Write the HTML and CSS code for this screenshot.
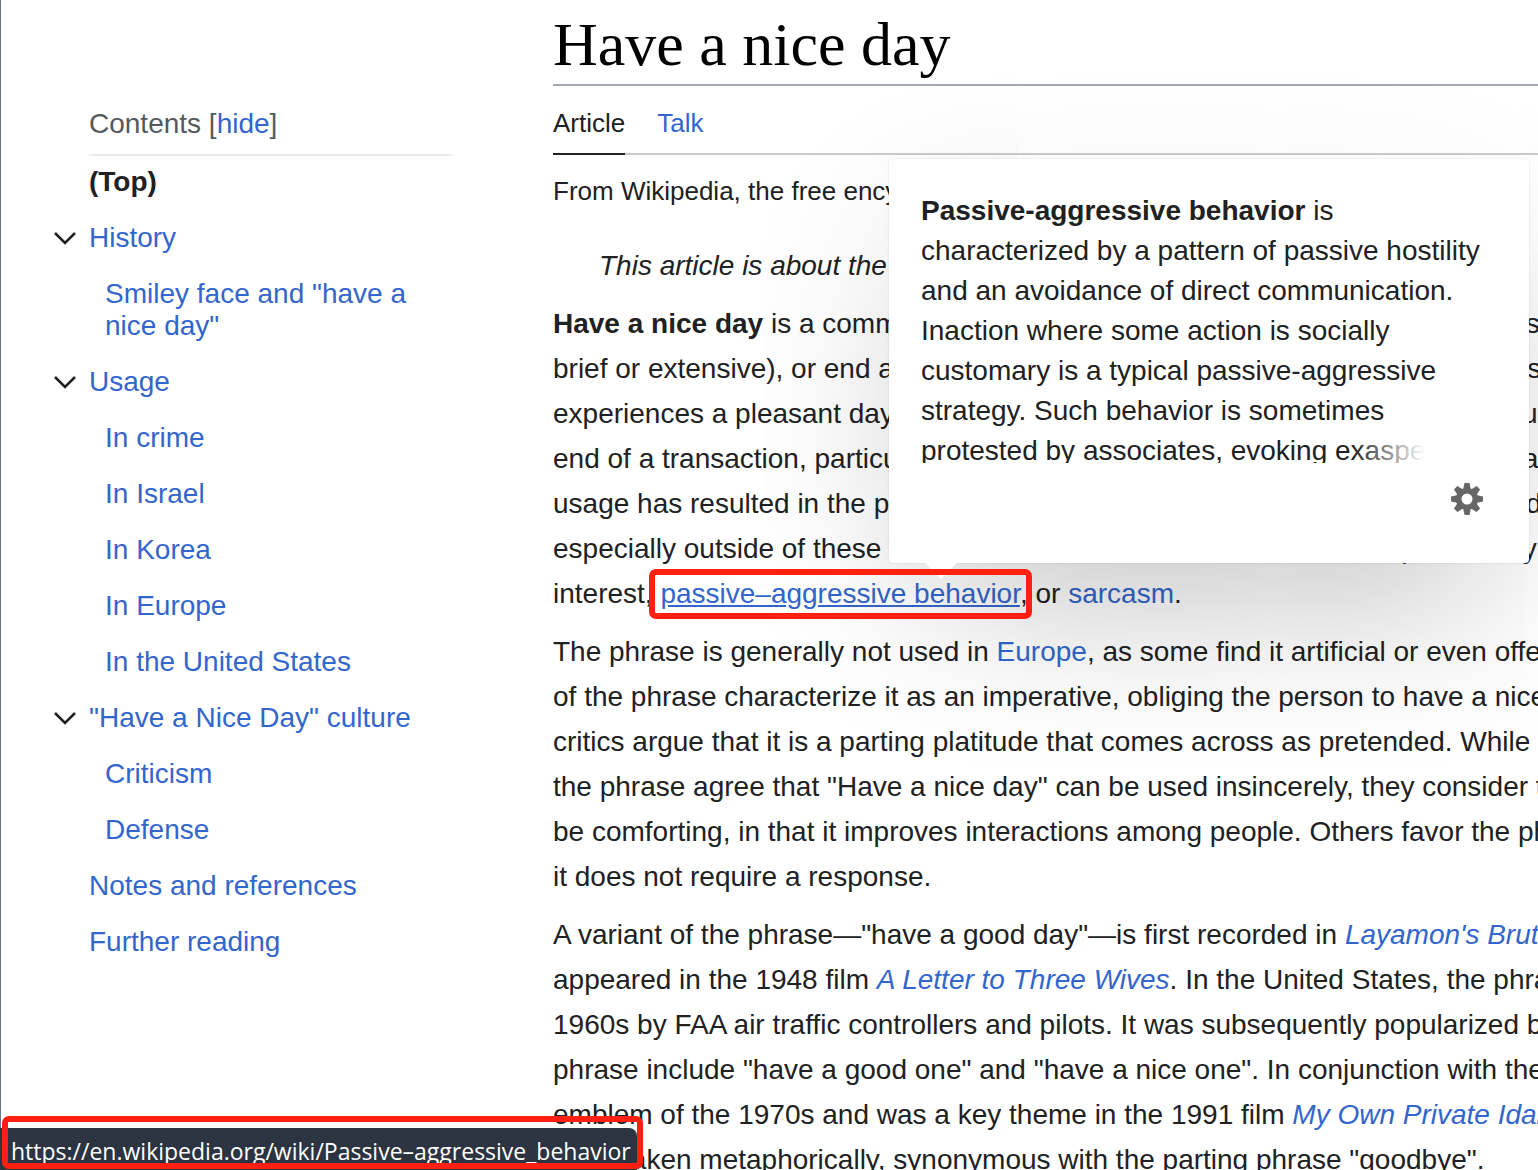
FILE: index.html
```
<!DOCTYPE html>
<html lang="en">
<head>
<meta charset="utf-8">
<title>Have a nice day - Wikipedia</title>
<link rel="stylesheet" href="styles.css">
</head>
<body>
<div class="page">
  <nav class="toc" aria-label="Contents">
    <div class="toc-header">Contents [<button type="button" class="toc-hide">hide</button>]</div>
    <ul class="toc-list">
      <li class="toc-item"><a class="toc-top" href="#top">(Top)</a></li>
      <li class="toc-item">
        <button type="button" class="toc-toggle" aria-label="Toggle History subsection"><svg viewBox="0 0 24 16" width="24" height="16"><path d="M2 3l10 10L22 3"/></svg></button>
        <a href="#History">History</a>
      </li>
      <li class="toc-item toc-sub"><a href="#Smiley">Smiley face and "have a nice day"</a></li>
      <li class="toc-item">
        <button type="button" class="toc-toggle" aria-label="Toggle Usage subsection"><svg viewBox="0 0 24 16" width="24" height="16"><path d="M2 3l10 10L22 3"/></svg></button>
        <a href="#Usage">Usage</a>
      </li>
      <li class="toc-item toc-sub"><a href="#Crime">In crime</a></li>
      <li class="toc-item toc-sub"><a href="#Israel">In Israel</a></li>
      <li class="toc-item toc-sub"><a href="#Korea">In Korea</a></li>
      <li class="toc-item toc-sub"><a href="#Europe">In Europe</a></li>
      <li class="toc-item toc-sub"><a href="#US">In the United States</a></li>
      <li class="toc-item">
        <button type="button" class="toc-toggle" aria-label="Toggle culture subsection"><svg viewBox="0 0 24 16" width="24" height="16"><path d="M2 3l10 10L22 3"/></svg></button>
        <a href="#Culture">"Have a Nice Day" culture</a>
      </li>
      <li class="toc-item toc-sub"><a href="#Criticism">Criticism</a></li>
      <li class="toc-item toc-sub"><a href="#Defense">Defense</a></li>
      <li class="toc-item"><a href="#Notes">Notes and references</a></li>
      <li class="toc-item"><a href="#Further">Further reading</a></li>
    </ul>
  </nav>

  <main class="article" id="top">
    <h1 class="title">Have a nice day</h1>
    <ul class="tabs">
      <li><a class="tab tab-selected" href="#article">Article</a></li>
      <li><a class="tab" href="#talk">Talk</a></li>
    </ul>
    <div class="tagline">From Wikipedia, the free encyclopedia</div>
    <div class="hatnote">This article is about the phrase.</div>
    <p><b>Have a nice day</b> is a commonly spoken expression used to conclude a conversation (whether<br>
    brief or extensive), or end a message by hoping the person to whom it is addressed<br>
    experiences a pleasant day. It is often uttered by some service employees to customers at the<br>
    end of a transaction, particularly in Israel and the United States. Its repetitious and dutiful<br>
    usage has resulted in the phrase developing the cultural connotation of hollow duty<br>
    especially outside of these countries, where it can mean a tone of impersonality<br>
    interest, <span class="marked"><a class="hovered" href="#behavior">passive–aggressive behavior</a>,</span> or <a href="#sarcasm">sarcasm</a>.</p>
    <p>The phrase is generally not used in <a href="#eu">Europe</a>, as some find it artificial or even offensive. Critics<br>
    of the phrase characterize it as an imperative, obliging the person to have a nice day. Other<br>
    critics argue that it is a parting platitude that comes across as pretended. While defenders of<br>
    the phrase agree that "Have a nice day" can be used insincerely, they consider the phrase to<br>
    be comforting, in that it improves interactions among people. Others favor the phrase because<br>
    it does not require a response.</p>
    <p>A variant of the phrase—"have a good day"—is first recorded in <a href="#brut"><i>Layamon's Brut</i></a> and<br>
    appeared in the 1948 film <a href="#wives"><i>A Letter to Three Wives</i></a>. In the United States, the phrase was<br>
    1960s by FAA air traffic controllers and pilots. It was subsequently popularized by truckers<br>
    phrase include "have a good one" and "have a nice one". In conjunction with the smiley<br>
    emblem of the 1970s and was a key theme in the 1991 film <a href="#idaho"><i>My Own Private Idaho</i></a>.<br>
    often taken metaphorically, synonymous with the parting phrase "goodbye".</p>

    <aside class="popup">
      <div class="popup-text"><b>Passive-aggressive behavior</b> is characterized by a pattern of passive hostility and an avoidance of direct communication. Inaction where some action is socially customary is a typical passive-aggressive strategy. Such behavior is sometimes <span class="popup-last">protested by associates, evoking exasperation</span></div>
      <div class="popup-footer">
        <button type="button" class="popup-settings" aria-label="Preview settings">
          <svg viewBox="-16 -16 32 32" width="32" height="32">
            <defs><path id="tooth" d="M-2.5-16h5l1.2 6h-7.4z"/></defs>
            <circle r="8.3" fill="none" stroke="#666" stroke-width="5.6"/>
            <g fill="#666">
              <use href="#tooth"/><use href="#tooth" transform="rotate(45)"/><use href="#tooth" transform="rotate(90)"/><use href="#tooth" transform="rotate(135)"/>
              <use href="#tooth" transform="rotate(180)"/><use href="#tooth" transform="rotate(225)"/><use href="#tooth" transform="rotate(270)"/><use href="#tooth" transform="rotate(315)"/>
            </g>
          </svg>
        </button>
      </div>
    </aside>
  </main>
</div>
<div class="status">https://en.wikipedia.org/wiki/Passive–aggressive_behavior</div>
</body>
</html>
```
FILE: styles.css
```
* {
  box-sizing: border-box;
}

body {
  margin: 0;
  height: 100vh;
  overflow: hidden;
  background: #fff;
  color: #202122;
  font: 28px/32px "Liberation Sans", Arial, sans-serif;
}

a {
  color: #36c;
  text-decoration: none;
}

button {
  padding: 0;
  border: 0;
  background: none;
  color: inherit;
  font: inherit;
  cursor: pointer;
}

ul {
  margin: 0;
  padding: 0;
  list-style: none;
}

.page {
  display: grid;
  grid-template-columns: 452px minmax(0, 1fr);
  column-gap: 100px;
  min-height: 100vh;
  border-left: 1px solid #6b768a;
}

/* Table of contents */
.toc {
  padding: 108px 0 0 52px;
}

.toc-header {
  margin-left: 36px;
  padding-bottom: 14px;
  border-bottom: 2px solid #eaecf0;
  color: #54595d;
}

.toc .toc-hide {
  color: #36c;
}

.toc-item {
  display: grid;
  grid-template-columns: 36px 1fr;
  align-items: center;
  padding: 10px 0 14px;
}

.toc-item a {
  grid-column: 2;
}

.toc-sub a {
  padding: 0 16px;
}

.toc-item .toc-top {
  color: #202122;
  font-weight: 700;
}

.toc-toggle {
  display: flex;
}

.toc-toggle path {
  fill: none;
  stroke: #202122;
  stroke-width: 2.6;
}

/* Article */
.article {
  position: relative;
  overflow: hidden;
  white-space: nowrap;
}

.title {
  margin: 0;
  padding-top: 4px;
  border-bottom: 2px solid #a2a9b1;
  color: #000;
  font: 62px/80px Georgia, "Liberation Serif", serif;
}

.tabs {
  display: flex;
  gap: 32px;
  border-bottom: 2px solid #c8ccd1;
  font-size: 26px;
}

.tab {
  display: block;
  margin-bottom: -2px;
  padding: 21px 0 14px;
  border-bottom: 2px solid transparent;
}

.tab-selected {
  border-bottom-color: #202122;
  color: #202122;
}

.tagline {
  margin-top: 16px;
  font-size: 26px;
  line-height: 40px;
}

.hatnote {
  margin-top: 32px;
  padding-left: 46px;
  font-style: italic;
  line-height: 45px;
}

.article p {
  margin: 13px 0 0;
  line-height: 45px;
}

.hovered {
  text-decoration: underline;
}

/* Red frame around the link */
.marked {
  position: relative;
}

.marked::after {
  content: "";
  position: absolute;
  z-index: 3;
  inset: -9px -4px -10px -11px;
  border: 6px solid #ff2012;
  border-radius: 7px;
}

/* Page preview */
.popup {
  position: absolute;
  z-index: 2;
  top: 159px;
  left: 336px;
  width: 640px;
  padding: 32px;
  border-radius: 4px;
  background: #fff;
  box-shadow: 0 60px 180px -40px rgba(0, 0, 0, 0.3), 0 0 2px rgba(0, 0, 0, 0.15);
  line-height: 40px;
  white-space: normal;
}

.popup::after {
  content: "";
  position: absolute;
  top: 100%;
  left: 36px;
  border: 16px solid transparent;
  border-top-color: #fff;
  border-bottom: 0;
}

.popup-text {
  position: relative;
  height: 272px;
  overflow: hidden;
}

.popup-text::after {
  content: "";
  position: absolute;
  right: 0;
  bottom: 0;
  width: 144px;
  height: 32px;
  background: linear-gradient(to right, rgba(255, 255, 255, 0), #fff 50%);
}

.popup-last {
  white-space: nowrap;
}

.popup-footer {
  display: flex;
  justify-content: flex-end;
  padding: 20px 14px 16px;
}

.popup-settings {
  display: flex;
  height: 32px;
}

/* Browser status bar */
.status {
  position: fixed;
  z-index: 4;
  left: 0;
  bottom: 0;
  padding: 7px 6px 3px 11px;
  border-top-right-radius: 8px;
  background: #2b3440;
  color: #fff;
  font: 23px/32px "Open Sans", "Noto Sans", sans-serif;
}

.status::after {
  content: "";
  position: absolute;
  inset: -12px -6px 1px 2px;
  border: 6px solid #ff2012;
  border-radius: 7px;
}
```
